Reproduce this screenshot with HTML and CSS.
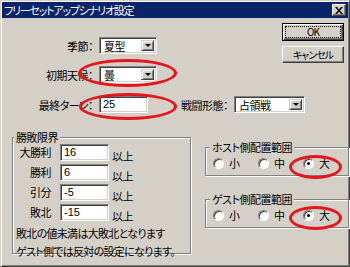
FILE: index.html
```html
<!DOCTYPE html>
<html lang="ja">
<head>
  <meta charset="UTF-8" />
  <title>フリーセットアップシナリオ設定</title>
  <link rel="stylesheet" href="styles.css">
</head>
<body>

  <div class="window">

    <div class="titlebar">
      <span class="title">フリーセットアップシナリオ設定</span>
      <span class="close">
        <svg width="8" height="7" viewBox="0 0 8 7"><path d="M0 0h2l2 2.5L6 0h2L5 3.5 8 7H6L4 4.5 2 7H0l3-3.5z" fill="#000"/></svg>
      </span>
    </div>

    <div class="content">

      <!-- top: settings + buttons -->
      <div class="top">
        <div class="form">
          <div class="row">
            <span class="lbl">季節：</span>
            <div class="combo combo-s"><span class="val">夏型</span><span class="drop"><i></i></span></div>
          </div>
          <div class="row row-2">
            <span class="lbl">初期天候：</span>
            <div class="combo combo-s"><span class="val">曇</span><span class="drop"><i></i></span></div>
          </div>
        </div>

        <div class="buttons">
          <button class="btn btn-default"><span class="focus">OK</span></button>
          <button class="btn">キャンセル</button>
        </div>
      </div>

      <div class="row row-3">
        <span class="lbl">最終ターン：</span>
        <div class="field field-turn">25</div>
        <span class="lbl lbl-battle">戦闘形態：</span>
        <div class="combo combo-l"><span class="val">占領戦</span><span class="drop"><i></i></span></div>
      </div>

      <!-- bottom: limits + placement -->
      <div class="bottom">
        <fieldset class="group limits">
          <legend>勝敗限界</legend>
          <div class="limit-row"><span class="limit-lbl">大勝利</span><div class="field field-num">16</div><span class="more">以上</span></div>
          <div class="limit-row"><span class="limit-lbl">勝利</span><div class="field field-num">6</div><span class="more">以上</span></div>
          <div class="limit-row"><span class="limit-lbl">引分</span><div class="field field-num">-5</div><span class="more">以上</span></div>
          <div class="limit-row"><span class="limit-lbl">敗北</span><div class="field field-num">-15</div><span class="more">以上</span></div>
          <p class="note">敗北の値未満は大敗北となります<br>ゲスト側では反対の設定になります。</p>
        </fieldset>

        <div class="placement">
          <fieldset class="group radios">
            <legend>ホスト側配置範囲</legend>
            <div class="radio-row">
              <span class="radio"><i class="dot"></i>小</span>
              <span class="radio"><i class="dot"></i>中</span>
              <span class="radio"><i class="dot on"></i>大</span>
            </div>
          </fieldset>
          <fieldset class="group radios guest">
            <legend>ゲスト側配置範囲</legend>
            <div class="radio-row">
              <span class="radio"><i class="dot"></i>小</span>
              <span class="radio"><i class="dot"></i>中</span>
              <span class="radio"><i class="dot on"></i>大</span>
            </div>
          </fieldset>
        </div>
      </div>

    </div>

    <!-- red marks drawn over the dialog -->
    <span class="mark mark-weather"></span>
    <span class="mark mark-turn"></span>
    <span class="mark mark-host"></span>
    <span class="mark mark-guest"></span>

  </div>

</body>
</html>
```

FILE: styles.css
```css
body {
  margin: 0;
  font-family: "Noto Sans CJK JP", sans-serif;
  font-size: 11px;
  font-feature-settings: "palt";
  letter-spacing: -0.5px;
  color: #000;
  background: #d4d0c8;
}

.window {
  position: relative;
  width: 350px;
  height: 267px;
  box-sizing: border-box;
  padding: 1px;
  background: #d4d0c8;
  border: 1px solid;
  border-color: #d4d0c8 #404040 #404040 #d4d0c8;
  box-shadow: inset 1px 1px #fff, inset -1px -1px #808080;
}

.titlebar {
  display: flex;
  align-items: center;
  justify-content: space-between;
  height: 16px;
  background: #0a246a;
  color: #fff;
}

.title {
  padding-left: 2px;
  line-height: 16px;
  letter-spacing: -1.2px;
}

.close {
  display: flex;
  align-items: center;
  justify-content: center;
  width: 14px;
  height: 12px;
  margin-right: 2px;
  box-sizing: border-box;
  background: #d4d0c8;
  border: 1px solid;
  border-color: #fff #404040 #404040 #fff;
  box-shadow: inset -1px -1px #808080;
}

/* top part */
.top {
  display: flex;
  justify-content: space-between;
}

.form {
  padding-top: 19px;
}

.row {
  display: flex;
  align-items: center;
  height: 17px;
}

.row-2 {
  margin-top: 12px;
}

.row-3 {
  margin-top: 13px;
}

.lbl {
  width: 91px;
  margin-right: 6px;
  text-align: right;
  white-space: nowrap;
}

.lbl-battle {
  width: 52px;
  margin-left: 28px;
}

.field,
.combo {
  height: 17px;
  box-sizing: border-box;
  background: #fff;
  border: 1px solid;
  border-color: #808080 #fff #fff #808080;
  box-shadow: inset 1px 1px #404040, inset -1px -1px #d4d0c8;
}

.field {
  padding-left: 3px;
  font-family: "Liberation Sans", sans-serif;
  font-size: 11px;
  letter-spacing: 0;
  line-height: 15px;
}

.field-turn {
  width: 49px;
}

.combo {
  display: flex;
  align-items: stretch;
  padding: 2px;
}

.combo-s {
  width: 58px;
}

.combo-l {
  width: 71px;
}

.combo .val {
  flex: 1;
  padding-left: 2px;
  line-height: 13px;
}

.drop {
  display: flex;
  align-items: center;
  justify-content: center;
  width: 13px;
  box-sizing: border-box;
  background: #d4d0c8;
  border: 1px solid;
  border-color: #d4d0c8 #404040 #404040 #d4d0c8;
  box-shadow: inset 1px 1px #fff, inset -1px -1px #808080;
}

.drop i {
  width: 0;
  height: 0;
  border-left: 3px solid transparent;
  border-right: 3px solid transparent;
  border-top: 3px solid #000;
}

.buttons {
  display: flex;
  flex-direction: column;
  gap: 5px;
  padding-top: 5px;
  margin-right: 4px;
}

.btn {
  width: 62px;
  height: 17px;
  padding: 0;
  box-sizing: border-box;
  font-family: "Noto Sans CJK JP", sans-serif;
  font-size: 10px;
  font-feature-settings: "palt";
  letter-spacing: -1px;
  line-height: 13px;
  color: #000;
  background: #d4d0c8;
  border: 1px solid;
  border-color: #fff #404040 #404040 #fff;
  box-shadow: inset -1px -1px #808080;
}

.btn-default {
  display: flex;
  padding: 2px;
  height: 18px;
  border: 1px solid #000;
  box-shadow: inset 1px 1px #fff, inset -1px -1px #404040, inset -2px -2px #808080;
}

.focus {
  flex: 1;
  line-height: 10px;
  border: 1px dotted #000;
}

/* bottom part */
.bottom {
  display: flex;
  margin-top: 17px;
}

.group {
  margin: 0;
  padding: 0;
  box-sizing: border-box;
  border: 1px solid #808080;
  box-shadow: inset 1px 1px #fff, 1px 1px #fff;
}

.group legend {
  padding: 0 2px;
  line-height: 14px;
  background: #d4d0c8;
}

.limits {
  width: 179px;
  height: 124px;
  margin-left: 10px;
}

.limits legend {
  margin-left: 1px;
}

.limit-row {
  display: flex;
  align-items: flex-start;
  height: 17px;
  margin-bottom: 3px;
}

.limit-lbl {
  width: 38px;
  margin-right: 9px;
  text-align: right;
  line-height: 17px;
}

.field-num {
  width: 49px;
}

.more {
  margin-left: 3px;
  padding-top: 5px;
  line-height: 14px;
}

.note {
  margin: 1px 0 0;
  padding-left: 3px;
  line-height: 18px;
  letter-spacing: -0.7px;
  white-space: nowrap;
}

.placement {
  display: flex;
  flex-direction: column;
  width: 131px;
  margin-left: 14px;
  padding-top: 10px;
}

.radios {
  height: 36px;
}

.radios legend {
  margin-left: 4px;
}

.guest {
  margin-top: 16px;
}

.radio-row {
  display: flex;
  align-items: center;
  height: 18px;
  padding-left: 7px;
}

.radio {
  display: flex;
  align-items: center;
  gap: 5px;
  width: 45px;
}

.dot {
  display: flex;
  align-items: center;
  justify-content: center;
  width: 11px;
  height: 11px;
  box-sizing: border-box;
  border-radius: 50%;
  background: #fff;
  border: 1px solid;
  border-color: #808080 #fff #fff #808080;
  box-shadow: inset 1px 1px #404040;
}

.dot.on::after {
  content: "";
  width: 3px;
  height: 3px;
  border-radius: 50%;
  background: #000;
}

/* red hand-drawn marks */
.mark {
  position: absolute;
  box-sizing: border-box;
  border: 3px solid #e8141c;
  border-radius: 50%;
}

.mark-weather {
  left: 77px;
  top: 58px;
  width: 99px;
  height: 28px;
}

.mark-turn {
  left: 78px;
  top: 92px;
  width: 98px;
  height: 27px;
}

.mark-host {
  left: 288px;
  top: 154px;
  width: 53px;
  height: 24px;
}

.mark-guest {
  left: 288px;
  top: 205px;
  width: 53px;
  height: 24px;
}
```
